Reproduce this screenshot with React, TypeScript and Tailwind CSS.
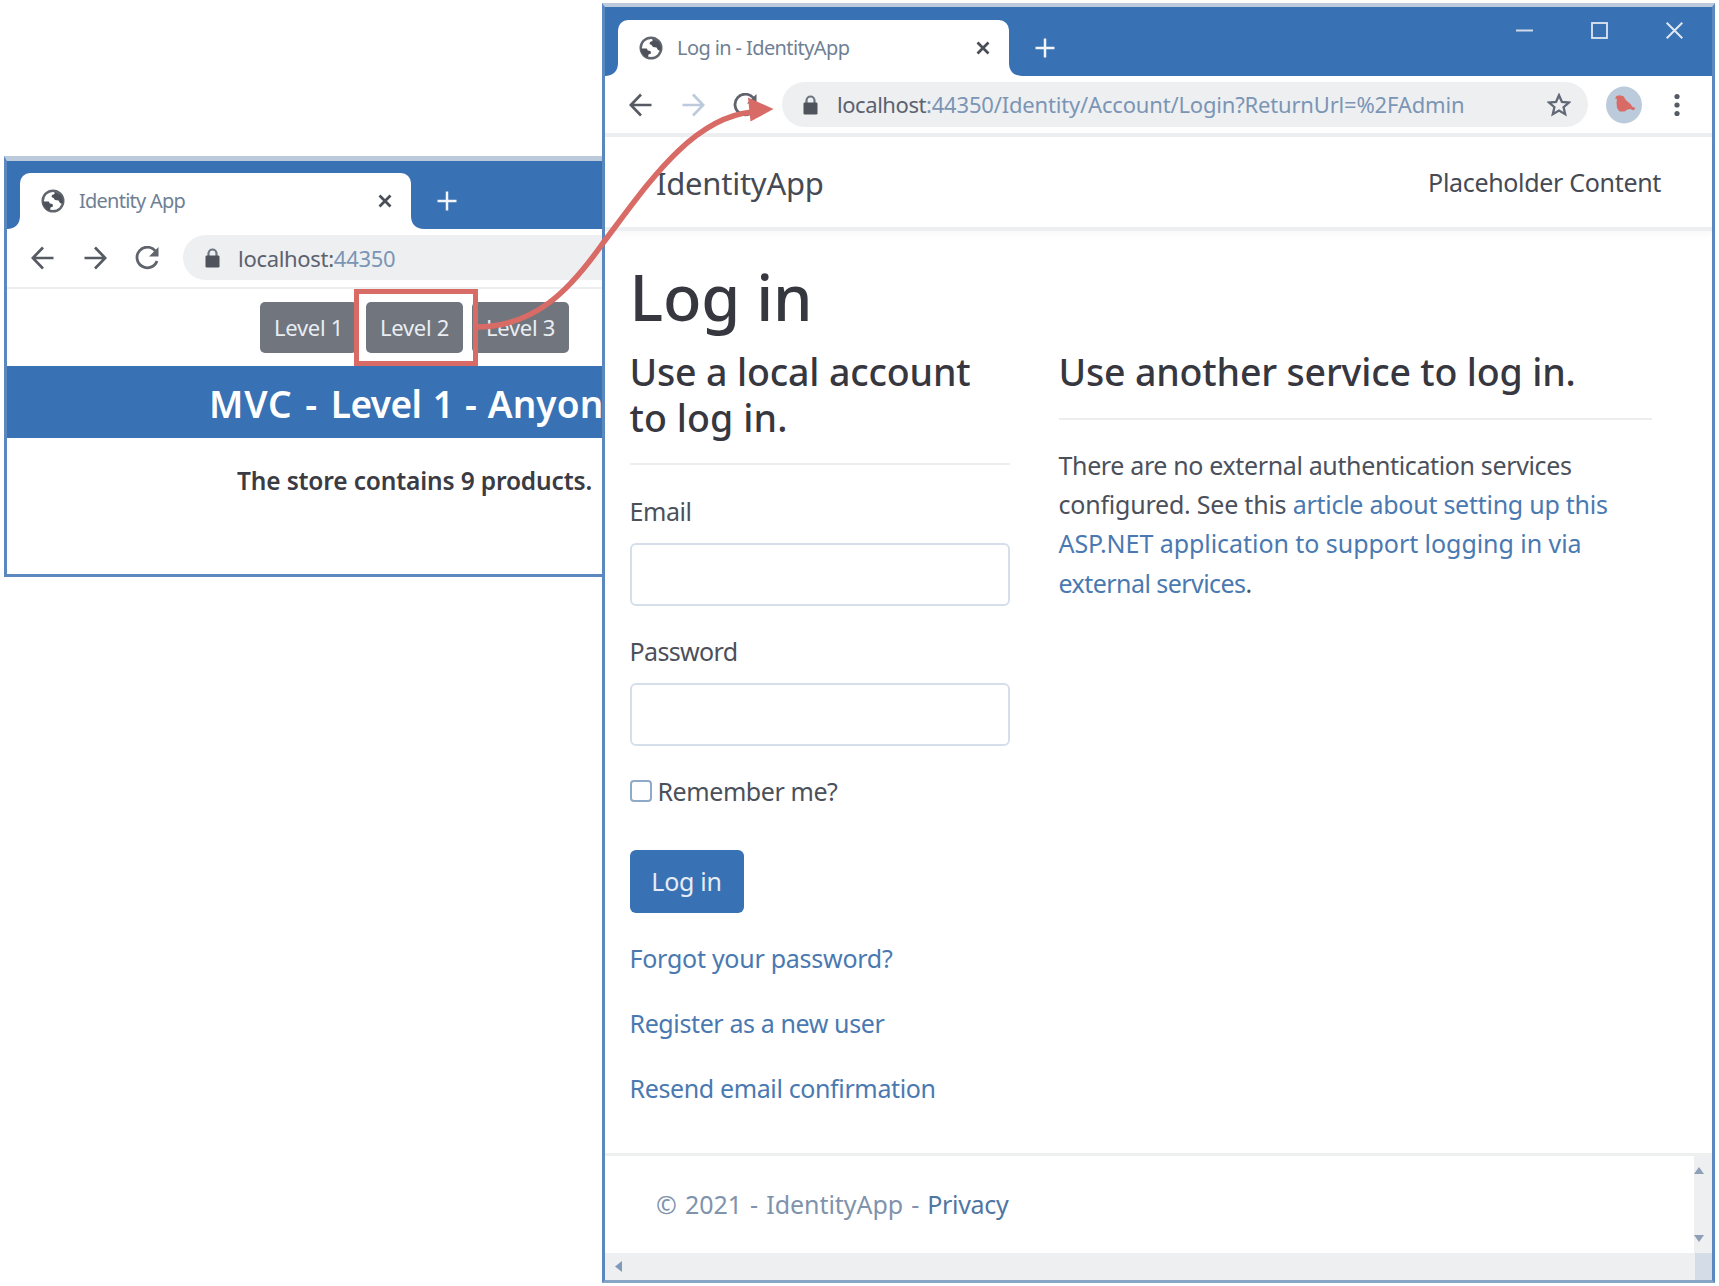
function Globe() {
  return (
    <svg viewBox="0 0 24 24" className="h-6 w-6 shrink-0">
      <circle cx="12" cy="12" r="10.300" fill="#fff" stroke="#61666e" strokeWidth="2.400" />
      <path d="M13.500 2.500 20 6l2.300 6-.8 3-2.500-1-1.500-2.500-3.500-.5-1.500-2-2-1 .5-2 2.500-1z" fill="#4d5159" />
      <path d="M1.800 12.500h6l1 2 2.700.5.5 2.500-2.500 1-.5 2.500-2 .3-4-3.800z" fill="#4d5159" />
    </svg>
  );
}

type TabBarProps = { title: string; titleClass: string; barClass: string; controls?: boolean };

function TabBar({ title, titleClass, barClass, controls }: TabBarProps) {
  return (
    <div className={"flex shrink-0 items-end bg-[#3871b4] pl-[13px] " + barClass}>
      <div className="relative flex h-[56px] w-[391px] items-center rounded-t-[10px] bg-white pl-[21px]">
        <svg viewBox="0 0 13 13" className="absolute bottom-0 -left-[13px] h-[13px] w-[13px]">
          <path d="M13 0v13H0C8 13 13 8 13 0z" fill="#fff" />
        </svg>
        <svg viewBox="0 0 13 13" className="absolute -right-[13px] bottom-0 h-[13px] w-[13px]">
          <path d="M0 0v13h13C5 13 0 8 0 0z" fill="#fff" />
        </svg>
        <Globe />
        <span className={"ml-[14px] text-[20px] leading-7 whitespace-nowrap text-[#6f7f94] " + titleClass}>{title}</span>
        <svg viewBox="0 0 14 14" className="mr-[19px] ml-auto h-[14px] w-[14px]">
          <path d="M1.500 1.500l11 11M12.500 1.500l-11 11" stroke="#4a4e57" strokeWidth="2.800" />
        </svg>
      </div>
      <svg viewBox="0 0 20 20" className="mb-[18px] ml-[26px] h-5 w-5">
        <path d="M10 .5v19M.5 10h19" stroke="#f3f6fa" strokeWidth="2.500" />
      </svg>
      {controls && (
        <div className="mr-[29px] mb-[37px] ml-auto flex gap-[58px]">
          <svg viewBox="0 0 17 17" className="h-[17px] w-[17px]">
            <path d="M0 8.500h17" stroke="#cfdbe8" strokeWidth="2" />
          </svg>
          <svg viewBox="0 0 17 17" className="h-[17px] w-[17px]">
            <rect x="1" y="1" width="15" height="15" fill="none" stroke="#dfe7f0" strokeWidth="1.800" />
          </svg>
          <svg viewBox="0 0 17 17" className="h-[17px] w-[17px]">
            <path d="M.7.7l15.600 15.600M16.300.7.7 16.300" stroke="#dfe7f0" strokeWidth="2" />
          </svg>
        </div>
      )}
    </div>
  );
}

function Arrow({ className }: { className: string }) {
  return (
    <svg viewBox="0 0 23 24" className={className} fill="none" stroke="currentColor" strokeWidth="2.700">
      <path d="M22.500 12H2M12 1.500 1.800 12 12 22.500" />
    </svg>
  );
}

function Nav({ forward }: { forward: string }) {
  return (
    <div className="flex items-center pl-[24px]">
      <Arrow className="h-6 w-[23px] text-[#565a62]" />
      <Arrow className={"ml-[30px] h-6 w-[23px] rotate-180 " + forward} />
      <svg viewBox="0 0 24 24" className="ml-[28px] h-6 w-6" fill="none">
        <path d="M20.500 5.200A10.300 10.300 0 1 0 22 15" stroke="#5f636b" strokeWidth="2.800" />
        <path d="M23.500 1v9.500H14z" fill="#5f636b" />
      </svg>
    </div>
  );
}

function Lock() {
  return (
    <svg viewBox="0 0 15 20" className="h-5 w-[15px] shrink-0">
      <path d="M3.500 8V5.500a4 4 0 0 1 8 0V8" fill="none" stroke="#6c7683" strokeWidth="2.200" />
      <rect x=".5" y="7.500" width="14" height="12" rx="1.300" fill="#4f535b" />
    </svg>
  );
}

function StoreWindow() {
  return (
    <section className="absolute top-[156px] left-1 flex h-[421px] w-[601px] flex-col overflow-hidden border-t-[5px] border-b-[3px] border-l-[3px] border-t-[#bccbdc] border-b-[#5b89bf] border-l-[#5b89bf] bg-white">
      <TabBar title="Identity App" titleClass="tracking-[-0.76px]" barClass="h-[68px]" />
      <div className="flex h-[58px] shrink-0 items-center">
        <Nav forward="text-[#565a62]" />
        <div className="-mt-px ml-[24px] flex h-[45px] grow items-center rounded-l-full bg-[#eeeff1] pl-[22px]">
          <Lock />
          <span className="ml-[18px] text-[22px] leading-8 tracking-[-0.3px] whitespace-nowrap text-[#7b95b5]">
            <span className="text-[#5b626e]">localhost:</span>44350
          </span>
        </div>
      </div>
      <div className="h-[2px] shrink-0 bg-[#eceef0]" />
      <div className="flex h-[77px] shrink-0 gap-[9px] pt-[13px] pl-[253px] text-[22px] tracking-[-0.3px] text-[#e9edf2]">
        {["Level 1", "Level 2", "Level 3"].map((label) => (
          <div key={label} className="flex h-[51px] w-[97px] shrink-0 items-center justify-center rounded-[5px] bg-[#70757e]">
            {label}
          </div>
        ))}
      </div>
      <div className="h-[72px] shrink-0 bg-[#3871b4] pt-[7px] pl-[202px] text-[37px] leading-[62px] font-semibold tracking-[-0.600px] whitespace-nowrap text-white [word-spacing:2.500px]">
        <span className="tracking-[0.800px]">MVC - </span>Level 1 - <span className="tracking-[0.100px]">Anyone</span>
      </div>
      <p className="pt-[23px] pl-[230px] text-[24.500px] leading-[39px] font-semibold tracking-[-0.155px] whitespace-nowrap text-[#3a3b43]">
        The store contains 9 products.
      </p>
    </section>
  );
}

function Rule({ className }: { className: string }) {
  return <div className={"h-[2px] shrink-0 bg-[#eceded] " + className} />;
}

function LoginWindow() {
  return (
    <section className="absolute top-[3px] left-[602px] flex h-[1280px] w-[1113px] flex-col border-x-[3px] border-t-4 border-b-[3px] border-x-[#5b89bf] border-t-[#bccbdc] border-b-[#88a4c6] bg-white whitespace-nowrap">
      <TabBar title="Log in - IdentityApp" titleClass="tracking-[-0.6px]" barClass="h-[69px]" controls />
      <div className="flex h-[57px] shrink-0 items-center">
        <Nav forward="text-[#bccbdc]" />
        <div className="ml-[25px] flex h-[45px] w-[806px] items-center rounded-full bg-[#eeeff1] pl-[21px]">
          <Lock />
          <span className="-mt-px ml-[19px] text-[22px] leading-8 tracking-[-0.18px] text-[#7b95b5]">
            <span className="tracking-[-0.44px] text-[#5b626e]">localhost</span>
            :44350/Identity/Account/Login?ReturnUrl=%2FAdmin
          </span>
          <svg viewBox="0 0 24 24" className="mr-[17px] ml-auto h-6 w-6">
            <path
              d="M12 2.200l2.900 6.600 7.100.7-5.400 4.700 1.600 7L12 17.500l-6.200 3.700 1.600-7L2 9.500l7.100-.7z"
              fill="none"
              stroke="#626a78"
              strokeWidth="2.300"
            />
          </svg>
        </div>
        <svg viewBox="0 0 36 40" className="ml-[18px] h-10 w-9">
          <ellipse cx="18" cy="20" rx="18" ry="18.500" fill="#bccbdc" />
          <path
            d="M9 13.500 10.500 11l3-.8 4 1 2.500 4 5 4.300 1 2 3.500 1.500-2 2.500-3-1.500-3 .5-3 2h-5l-2.500-3.500-.5-5.500.5-3.500z"
            fill="#d96b66"
          />
        </svg>
        <svg viewBox="0 0 6 24" className="ml-[32px] h-6 w-[6px] fill-[#565a62]">
          <circle cx="3" cy="3.500" r="2.600" />
          <circle cx="3" cy="12" r="2.600" />
          <circle cx="3" cy="20.500" r="2.600" />
        </svg>
      </div>
      <div className="h-1 shrink-0 bg-[#eceef0]" />
      <header className="flex h-[94px] shrink-0 items-center justify-between border-b-4 border-[#edeff1] pr-[51px] pl-[51px] text-[#454a54] shadow-[0_4px_8px_rgba(0,0,0,0.03)]">
        <span className="pt-[2px] text-[31px] leading-[44px] tracking-[-0.25px]">IdentityApp</span>
        <span className="text-[25px] leading-[39px] tracking-[-0.32px]">Placeholder Content</span>
      </header>
      <main className="h-[922px] shrink-0 pt-[27px] pl-[24.500px] text-[25px] leading-[39px] text-[#4b505b]">
        <h1 className="text-[63px] leading-[78px] font-medium tracking-[-0.2px] text-[#37373f]">Log in</h1>
        <div className="mt-[13px] flex gap-[49px]">
          <form className="flex w-[380px] flex-col">
            <h4 className="flex flex-col text-[37.500px] leading-[46px] font-medium text-[#37373f]">
              <span className="tracking-[-0.14px]">Use a local account</span>
              <span className="tracking-[0.11px]">to log in.</span>
            </h4>
            <Rule className="mt-[22px]" />
            <label className="mt-[27px] tracking-[-0.44px]">Email</label>
            <div className="mt-[12px] h-[63px] rounded-[6px] border-2 border-[#d5dfea]" />
            <label className="mt-[26px] tracking-[-0.63px]">Password</label>
            <div className="mt-[12px] h-[63px] rounded-[6px] border-2 border-[#d5dfea]" />
            <label className="mt-[26px] flex items-center tracking-[-0.43px]">
              <span className="-mt-px h-[22px] w-[22px] rounded-[4px] border-2 border-[#8fa9c8]" />
              <span className="ml-[6px]">Remember me?</span>
            </label>
            <div className="mt-[39px] flex h-[63px] w-[114px] items-center justify-center rounded-[6px] bg-[#3871b4] tracking-[-0.29px] text-[#e6ecf3]">
              Log in
            </div>
            <a className="mt-[26px] tracking-[-0.26px] text-[#4a79b1]">Forgot your password?</a>
            <a className="mt-[26px] tracking-[-0.39px] text-[#4a79b1]">Register as a new user</a>
            <a className="mt-[26px] tracking-[-0.37px] text-[#4a79b1]">Resend email confirmation</a>
          </form>
          <div className="flex w-[593px] flex-col">
            <h4 className="text-[37.500px] leading-[46px] font-medium tracking-[-0.17px] text-[#37373f]">
              Use another service to log in.
            </h4>
            <Rule className="mt-[23px]" />
            <p className="mt-[26px] flex flex-col leading-[39.200px] text-[#4a79b1]">
              <span className="tracking-[-0.36px] text-[#4b505b]">There are no external authentication services</span>
              <span className="tracking-[-0.26px]">
                <span className="tracking-[-0.22px] text-[#4b505b]">configured. See this </span>
                article about setting up this
              </span>
              <span className="tracking-[-0.05px]">ASP.NET application to support logging in via</span>
              <span className="tracking-[-0.55px]">
                external services<span className="text-[#4b505b]">.</span>
              </span>
            </p>
          </div>
        </div>
      </main>
      <footer className="flex h-[100px] shrink-0 border-t-[3px] border-[#eeefef]">
        <div className="grow pt-[29px] pl-[51px] text-[25px] leading-[39px] tracking-[-0.05px] text-[#7f93ad] [word-spacing:1.700px]">
          © 2021 - IdentityApp - <a className="tracking-[-0.34px] text-[#4f76a3]">Privacy</a>
        </div>
        <div className="flex w-[18px] flex-col justify-between bg-[#eeeff1] pt-[11px] pb-[11px]">
          <svg viewBox="0 0 10 7" className="h-[7px] w-[10px]">
            <path d="M0 7l5-7 5 7z" fill="#8e9fb8" />
          </svg>
          <svg viewBox="0 0 10 7" className="h-[7px] w-[10px]">
            <path d="M0 0l5 7 5-7z" fill="#8e9fb8" />
          </svg>
        </div>
      </footer>
      <div className="flex grow items-center justify-between bg-[#eeeff1] pl-[10px]">
        <svg viewBox="0 0 7 11" className="h-[11px] w-[7px]">
          <path d="M7 0v11L0 5.500z" fill="#8199ba" />
        </svg>
        <div className="h-full w-[17px] bg-[#d3dce7]" />
      </div>
    </section>
  );
}

export default function App() {
  return (
    <div className="relative h-[1286px] w-[1719px] overflow-hidden bg-white font-['Noto_Sans',sans-serif]">
      <StoreWindow />
      <LoginWindow />
      <div className="absolute top-[289px] left-[354px] h-[77px] w-[124px] border-[5px] border-[#d96b66]" />
      <svg viewBox="0 0 1719 1286" className="absolute top-0 left-0 h-[1286px] w-[1719px]">
        <path
          d="M476 327C535 327 570 290 603 243C645 188 690 118 752 112"
          fill="none"
          stroke="#d96b66"
          strokeWidth="5.500"
        />
        <path d="M748 97.500 773.500 109 750.500 121.500z" fill="#d96b66" />
      </svg>
    </div>
  );
}
